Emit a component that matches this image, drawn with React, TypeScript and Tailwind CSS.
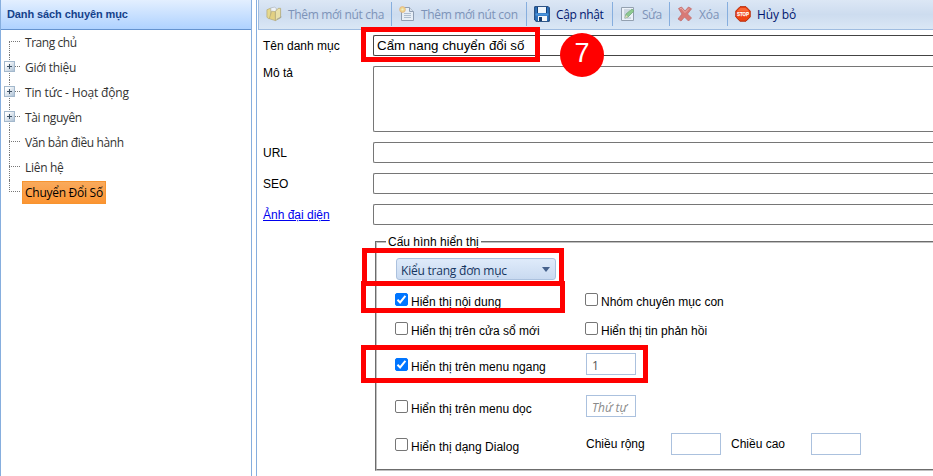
import type { ReactNode } from "react";

const arial = "font-['Liberation_Sans',Arial,sans-serif]";
const segoe = "font-['Open_Sans','Noto_Sans',sans-serif]";

function TreeRow({ label, expandable, first, last, selected, tracking }: {
  label: string; expandable?: boolean; first?: boolean; last?: boolean; selected?: boolean; tracking: string;
}) {
  return (
    <li className="flex h-[25px] items-center">
      <div className="relative h-full w-[21px] shrink-0">
        <span className={`absolute left-2 border-l border-dotted border-[#777] ${first ? "top-[12px] h-[13px]" : last ? "top-0 h-[12px]" : "top-0 h-[25px]"}`} />
        <span className="absolute left-2 top-[11px] w-[11px] border-t border-dotted border-[#777]" />
        {expandable && (
          <svg className="absolute left-[3px] top-[6px]" width="11" height="11" viewBox="0 0 11 11">
            <defs>
              <linearGradient id="plus" x1="0" y1="0" x2="1" y2="1">
                <stop offset="0.2" stopColor="#fff" />
                <stop offset="1" stopColor="#a9bed3" />
              </linearGradient>
            </defs>
            <rect x="0.5" y="0.5" width="10" height="10" fill="url(#plus)" stroke="#a3b8cc" />
            <path d="M3 5.5h5M5.5 3v5" stroke="#3c5064" />
          </svg>
        )}
      </div>
      <span className={`flex h-[23px] items-center whitespace-nowrap pt-px ${tracking} ${selected ? "w-[84px] border border-[#f79430] bg-gradient-to-b from-[#f9aa5c] to-[#fb9431] pl-[2px] text-black" : "pl-[3px] text-[#333]"}`}>
        {label}
      </span>
    </li>
  );
}

function Tool({ icon, label, width, tracking, disabled }: { icon: ReactNode; label: string; width: string; tracking: string; disabled?: boolean }) {
  return (
    <div className={`flex h-[24px] shrink-0 items-center border-r border-[#86aede] pl-[7px] ${width}`}>
      <span className={`flex h-4 w-4 shrink-0 ${disabled ? "opacity-60" : ""}`}>{icon}</span>
      <span className={`ml-[6px] mt-[2px] whitespace-nowrap ${tracking} ${disabled ? "text-[#7d93b8]" : "text-[#00156e]"}`}>{label}</span>
    </div>
  );
}

const FolderIcon = () => (
  <svg width="17" height="16" viewBox="0 0 17 16">
    <path d="M1 3.5L4.5 2l1 1v9L3 13l-2-1.5z" fill="#f6d84e" stroke="#a98b2a" strokeWidth=".8" />
    <path d="M5 1.5l4-.8 2 1.3v9l-5 2z" fill="#fff" stroke="#888" strokeWidth=".6" />
    <path d="M3.5 13l2.5-8 4 .5V15z" fill="#f0c93c" stroke="#9c8126" strokeWidth=".7" />
    <path d="M10 5.5L11 4l2-2h2.5v10L10 15z" fill="#fae37c" stroke="#9c8126" strokeWidth=".8" />
    <path d="M11.5 13.5l5-2.5" stroke="#666" strokeWidth=".7" />
  </svg>
);
const NewIcon = () => (
  <svg width="16" height="16" viewBox="0 0 16 16">
    <path d="M2.5 1.5h8l4 4v9h-12z" fill="#f8fafc" stroke="#64748b" />
    <path d="M10.5 1.5v4h4" fill="#dbe3ec" stroke="#64748b" />
    <path d="M5 7.5h7M5 9.5h7M5 11.5h7" stroke="#9aa9ba" />
    <circle cx="3.5" cy="3.5" r="2.9" fill="#ffd24a" stroke="#ef923b" strokeWidth=".8" />
    <circle cx="3.5" cy="3.5" r="1.1" fill="#fff4b2" />
  </svg>
);
const SaveIcon = () => (
  <svg width="16" height="16" viewBox="0 0 16 16">
    <path d="M.7.7h13.6l1 1v13.6H2l-1.3-1.3z" fill="#2e74bf" stroke="#123b70" />
    <path d="M4 1h8v6H4z" fill="#eef5fb" />
    <path d="M3 1h1v6H3zM12 1h1v6h-1z" fill="#143f78" />
    <path d="M1.5 7.5h13v2h-13z" fill="#4b94db" />
    <path d="M4 10h9v5H4z" fill="#f4f6f8" />
    <path d="M5 11h3v4H5z" fill="#153d70" />
  </svg>
);
const EditIcon = () => (
  <svg width="16" height="16" viewBox="0 0 16 16">
    <path d="M1.5 1.5h12v13h-12z" fill="#fff" stroke="#6a7785" />
    <path d="M4 4h6M4 6h5M4 8h3M4 10h2M4 12h7" stroke="#9ba6b2" />
    <path d="M5 12l1-4 6-5 2 2-6 6z" fill="#63bd52" stroke="#388933" strokeWidth=".8" />
    <path d="M5 12l1-3 2 2z" fill="#f5d59c" />
  </svg>
);
const DeleteIcon = () => (
  <svg width="16" height="16" viewBox="0 0 16 16">
    <path d="M1.5 2.5l3-1.5L8 5l3.5-4L14.5 2.8 10.5 8l4 4-3 3-4-4-3.5 4-3-2 4-5z" fill="#df3826" stroke="#b62318" strokeWidth=".8" />
    <path d="M3 2.7l1.5-.3L8 6.5l4-4" fill="none" stroke="#f58a78" />
  </svg>
);
const StopIcon = () => (
  <svg width="16" height="16" viewBox="0 0 16 16">
    <path d="M5 .7h6L15.2 5v6L11 15.2H5L.8 11V5z" fill="#f04414" stroke="#b62b08" />
    <path d="M5.4 2h5.2L14 5.5H2z" fill="#ff8050" opacity=".6" />
    <text x="2" y="10" fontSize="5.5" fontWeight="bold" fill="#fff" stroke="#fff" strokeWidth=".25" textLength="12" lengthAdjust="spacingAndGlyphs" fontFamily="Liberation Sans">STOP</text>
  </svg>
);

function Check({ checked, label }: { checked?: boolean; label: string }) {
  return (
    <label className="flex items-start">
      <span className={`flex h-[13px] w-[13px] shrink-0 rounded-[2px] border ${checked ? "border-[#0075ff] bg-[#0075ff]" : "border-[#767676] bg-white"}`}>
        {checked && (
          <svg width="11" height="11" viewBox="0 0 11 11">
            <path d="M1.5 5.8l2.6 2.7 5.3-6.6" fill="none" stroke="#fff" strokeWidth="2" />
          </svg>
        )}
      </span>
      <span className="ml-[3px] mt-px whitespace-nowrap leading-[16px]">{label}</span>
    </label>
  );
}

function Field({ label, height, box, labelTop = "pt-[3px]", link, children }: { label: string; height: string; box: string; labelTop?: string; link?: boolean; children?: ReactNode }) {
  return (
    <div className={`flex ${height}`}>
      <div className={`w-[110px] shrink-0 leading-[17px] ${labelTop} ${link ? "text-[#0000ee] underline" : ""}`}>{label}</div>
      <div className={`flex flex-1 rounded-l-[2px] border border-r-0 bg-white pl-[3px] ${box}`}>{children}</div>
    </div>
  );
}

const NumberBox = ({ children }: { children?: ReactNode }) => (
  <div className={`flex h-[22px] w-[50px] shrink-0 items-center border border-[#abc1de] bg-white pl-[5px] pt-[3px] text-[12px] ${segoe}`}>{children}</div>
);

export default function App() {
  return (
    <div className={`relative flex h-[476px] w-[933px] overflow-hidden bg-white text-[12px] text-black ${arial}`}>
      <aside className="w-[252px] shrink-0 border-x border-[#86aede]">
        <h1 className="flex h-[30px] items-center border-b border-[#6593cf] bg-gradient-to-b from-[#e3efff] to-[#afd2ff] pl-[6px] pb-px text-[11px] font-bold text-[#15428b]">
          <span className="whitespace-nowrap tracking-[-0.1px]">Danh sách chuyên mục</span>
        </h1>
        <ul className={segoe}>
          <TreeRow label="Trang chủ" first tracking="tracking-[-0.45px]" />
          <TreeRow label="Giới thiệu" expandable tracking="tracking-[-0.3px]" />
          <TreeRow label="Tin tức - Hoạt động" expandable tracking="tracking-[-0.15px]" />
          <TreeRow label="Tài nguyên" expandable tracking="tracking-[-0.4px]" />
          <TreeRow label="Văn bản điều hành" tracking="tracking-[-0.37px]" />
          <TreeRow label="Liên hệ" tracking="tracking-[-0.3px]" />
          <TreeRow label="Chuyển Đổi Số" last selected tracking="tracking-[-0.27px]" />
        </ul>
      </aside>
      <main className="ml-1 flex min-w-0 flex-1 flex-col overflow-hidden border-l border-[#86aede]">
        <nav className={`ml-px flex h-[30px] shrink-0 border-b border-l border-[#9fbce0] bg-gradient-to-b from-[#dce7f5] via-[#cddcef] to-[#dae7f5] pt-[2px] ${segoe}`}>
          <Tool icon={<FolderIcon />} label="Thêm mới nút cha" width="w-[133px]" tracking="tracking-[-0.33px]" disabled />
          <Tool icon={<NewIcon />} label="Thêm mới nút con" width="w-[135px]" tracking="tracking-[-0.33px]" disabled />
          <Tool icon={<SaveIcon />} label="Cập nhật" width="w-[86px]" tracking="tracking-[-0.35px]" />
          <Tool icon={<EditIcon />} label="Sửa" width="w-[57px]" tracking="tracking-[-0.5px]" disabled />
          <Tool icon={<DeleteIcon />} label="Xóa" width="w-[58px]" tracking="tracking-[-0.2px]" disabled />
          <div className="flex h-[24px] items-center pl-[7px]">
            <StopIcon />
            <span className="ml-[6px] mt-[2px] whitespace-nowrap tracking-[-0.15px] text-[#00156e]">Hủy bỏ</span>
          </div>
        </nav>
        <form className="flex flex-col pl-[6px] pt-[5px]">
          <Field label="Tên danh mục" height="h-[31px]" box="h-[21px] border-[#444]">
            <span className="whitespace-nowrap text-[13.333px] leading-[20px]">Cẩm nang chuyển đổi số</span>
          </Field>
          <Field label="Mô tả" height="h-[76px]" box="h-[66px] border-[#767676]" labelTop="pt-0 -mt-px" />
          <Field label="URL" height="h-[31px]" box="h-[21px] border-[#767676]" />
          <Field label="SEO" height="h-[31px]" box="h-[21px] border-[#767676]" />
          <Field label="Ảnh đại diện" height="h-[30px]" box="h-[21px] border-[#767676]" link />
          <fieldset className="ml-[112px] h-[237px] border-2 border-r-0 border-[#c0c0c0] [border-style:groove]">
            <legend className="ml-[9px] h-[16px] whitespace-nowrap px-[2px] leading-[16px]">Cấu hình hiển thị</legend>
            <div className="flex flex-col pl-[18px]">
              <div className={`ml-px mt-[8px] flex h-[22px] w-[160px] items-center justify-between rounded-[3px] border border-[#abc1de] bg-gradient-to-b from-[#dfebfa] to-[#c9daf0] pl-[4px] pr-[5px] text-[#15355f] ${segoe}`}>
                <span className="mt-[3px] whitespace-nowrap tracking-[-0.22px]">Kiểu trang đơn mục</span>
                <svg width="8" height="5" viewBox="0 0 8 5"><path d="M0 0h8L4 5z" fill="#45618c" /></svg>
              </div>
              <div className="mt-[13px] flex h-[29px]">
                <div className="w-[190px]"><Check checked label="Hiển thị nội dung" /></div>
                <Check label="Nhóm chuyên mục con" />
              </div>
              <div className="flex h-[31px]">
                <div className="w-[190px]"><Check label="Hiển thị trên cửa sổ mới" /></div>
                <Check label="Hiển thị tin phản hồi" />
              </div>
              <div className="flex h-[42px]">
                <div className="w-[191px] pt-[5px]"><Check checked label="Hiển thị trên menu ngang" /></div>
                <NumberBox><span className="text-[#555]">1</span></NumberBox>
              </div>
              <div className="flex h-[38px]">
                <div className="w-[191px] pt-[5px]"><Check label="Hiển thị trên menu dọc" /></div>
                <NumberBox><span className="whitespace-nowrap italic text-[#8a8a8a]">Thứ tự</span></NumberBox>
              </div>
              <div className="flex h-[24px]">
                <div className="w-[191px] pt-[5px]"><Check label="Hiển thị dạng Dialog" /></div>
                <span className="w-[85px] pt-[3px] leading-[16px]">Chiều rộng</span>
                <NumberBox />
                <span className="ml-[10px] w-[80px] pt-[3px] leading-[16px]">Chiều cao</span>
                <NumberBox />
              </div>
            </div>
          </fieldset>
        </form>
      </main>
      <div className="absolute left-[361px] top-[27px] h-[35px] w-[179px] border-[5px] border-[#f00]" />
      <div className="absolute left-[362px] top-[248px] h-[38px] w-[202px] border-[5px] border-[#f00]" />
      <div className="absolute left-[361px] top-[281px] h-[32px] w-[204px] border-[5px] border-[#f00]" />
      <div className="absolute left-[361px] top-[345px] h-[38px] w-[287px] border-[5px] border-[#f00]" />
      <div className="absolute left-[560px] top-[33px] flex h-[44px] w-[44px] items-center justify-center rounded-full bg-[#f00] pb-[3px] text-[27px] text-white">7</div>
    </div>
  );
}
